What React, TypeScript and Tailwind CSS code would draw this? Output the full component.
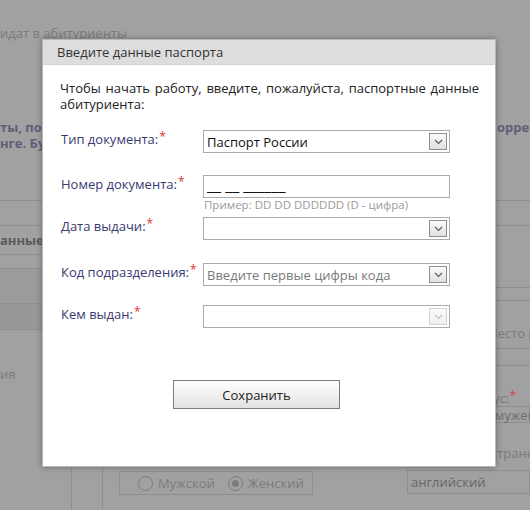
import React from "react";

function Chevron({ disabled }: { disabled?: boolean }) {
  return (
    <span
      className={
        "mr-[2px] flex h-[17px] w-[18px] shrink-0 items-center justify-center border bg-gradient-to-b " +
        (disabled
          ? "border-[#d2d2d2] from-[#fbfbfb] to-[#efefef]"
          : "border-[#8e8e8e] from-[#fbfbfb] to-[#e0e0e0]")
      }
    >
      <svg width="9" height="6" viewBox="0 0 9 6" fill="none">
        <path
          d="M1 1l3.5 3.5L8 1"
          stroke={disabled ? "#c4c4c4" : "#5a5a5a"}
          strokeWidth="1.2"
        />
      </svg>
    </span>
  );
}

function SelectBox({
  value,
  placeholder,
  disabled,
}: {
  value?: string;
  placeholder?: string;
  disabled?: boolean;
}) {
  return (
    <div className="flex h-[23px] w-[247px] items-center justify-between border border-[#ababab] bg-white pl-[3px]">
      <span className={value ? "text-[#111]" : "text-[#7a7a7a]"}>
        {value ?? placeholder ?? ""}
      </span>
      <Chevron disabled={disabled} />
    </div>
  );
}

function Label({ text }: { text: string }) {
  return (
    <div className="w-[143px] shrink-0 pl-[1px] pt-[1px] text-[#3a3a72]">
      {text}
      <span className="relative -top-[3px] ml-[1px] text-[12px] text-[#e0302e]">*</span>
    </div>
  );
}

function PassportDialog() {
  return (
    <div className="absolute left-[42px] top-[39px] flex h-[428px] w-[454px] flex-col border border-[#b8b8b8] bg-white shadow-[0_0_6px_rgba(0,0,0,0.35)]">
      <div className="flex h-[25px] shrink-0 items-center border-b border-[#d2d2d2] bg-[#dddddd] pl-[14px] text-[#333]">
        Введите данные паспорта
      </div>

      <div className="pl-[17px] pr-[16px] pt-[15px] text-[#222]">
        <p className="text-justify">
          Чтобы начать работу, введите, пожалуйста, паспортные данные абитуриента:
        </p>

        <div className="mt-[18px] flex">
          <Label text="Тип документа:" />
          <SelectBox value="Паспорт России" />
        </div>

        <div className="mt-[22px] flex">
          <Label text="Номер документа:" />
          <div>
            <div className="flex h-[23px] w-[247px] items-start overflow-hidden border border-[#ababab] bg-white pl-[3px] text-[16px] leading-[18px] text-[#111]">
              __ __ ______
            </div>
            <div className="h-[14px] pl-[1px] text-[11.5px] leading-[14px] text-[#9a9a9a]">
              Пример: DD DD DDDDDD (D - цифра)
            </div>
          </div>
        </div>

        <div className="mt-[5px] flex">
          <Label text="Дата выдачи:" />
          <SelectBox />
        </div>

        <div className="mt-[23px] flex">
          <Label text="Код подразделения:" />
          <SelectBox placeholder="Введите первые цифры кода" />
        </div>

        <div className="mt-[19px] flex">
          <Label text="Кем выдан:" />
          <SelectBox disabled />
        </div>

        <button className="ml-[113px] mt-[52px] h-[29px] w-[167px] border border-[#7c7c7c] bg-gradient-to-b from-white to-[#e2e2e2] text-[13px] text-[#222]">
          Сохранить
        </button>
      </div>
    </div>
  );
}

function Radio({ label, checked }: { label: string; checked?: boolean }) {
  return (
    <span className="flex items-center gap-[5px]">
      <span className="flex h-[15px] w-[15px] items-center justify-center rounded-full border border-[#7c7c7c]">
        {checked && <span className="h-[7px] w-[7px] rounded-full bg-[#7c7c7c]" />}
      </span>
      {label}
    </span>
  );
}

function BackgroundPage() {
  const line = "border-t border-[#8f8f8f]";
  return (
    <div className="h-[510px] overflow-hidden whitespace-nowrap text-[#7b7b7b]">
      <div className="pt-[25px]">идат в абитуриенты</div>

      <div className="mt-[78px] font-bold text-[#5d6077]">
        <div className="flex">
          <span className="w-[497px] shrink-0 overflow-hidden">
            ты, пожалуйста, проверьте введённые данные и при необходимости ск
          </span>
          <span>орректируйте</span>
        </div>
        <div>нге. Будьте внимательны при заполнении.</div>
      </div>

      <div className="mt-[49px] flex">
        <div className="w-[407px] shrink-0">
          <div className={"h-[25px] " + line} />
          <div className={"flex h-[29px] items-center font-bold text-[#5a5a5a] " + line}>
            анные
          </div>
          <div className={"h-[14px] " + line} />
          <div className={"h-[35px] bg-[#9b9b9b] " + line} />
          <div className="h-[27px] border-y border-[#8f8f8f] bg-[#989898]" />
          <div className="flex h-[180px]">
            <div className="w-[72px] border-r border-[#8f8f8f] pt-[36px]">ия</div>
            <div className="w-[31px] border-r border-[#8f8f8f]" />
            <div className="flex flex-1 flex-col justify-end pb-[15px] pl-[16px]">
              <div className="flex h-[24px] w-[194px] items-center gap-[13px] border border-[#8e8e8e] pl-[18px]">
                <Radio label="Мужской" />
                <Radio label="Женский" checked />
              </div>
            </div>
          </div>
        </div>

        <div className="min-w-0 flex-1">
          <div className={"h-[25px] " + line} />
          <div className={"h-[62px] " + line} />
          <div className={"h-[13px] " + line} />
          <div className={"h-[48px] pl-[79px] pt-[24px] " + line}>Место рождения</div>
          <div className={"h-[17px] " + line} />
          <div className={"pt-[24px] " + line}>
            <div className="-ml-[10px]">
              Семейный статус:
              <span className="relative -top-[3px] text-[#c9504a]">*</span>
            </div>
            <div className="ml-[49px] flex h-[17px] items-center border border-[#8e8e8e] pl-[4px] text-[#6e6e6e]">
              Не замужем
            </div>
            <div className="mt-[22px] pl-[58px]">Иностранный язык:</div>
            <div className="mt-[9px] flex h-[24px] items-center border border-[#8e8e8e] pl-[3px] text-[#666]">
              английский
            </div>
          </div>
        </div>
      </div>
    </div>
  );
}

export default function App() {
  return (
    <div className="relative h-[510px] w-[530px] overflow-hidden bg-[#a1a1a1] font-['Open_Sans',sans-serif] text-[13px] leading-4">
      <BackgroundPage />
      <PassportDialog />
    </div>
  );
}
